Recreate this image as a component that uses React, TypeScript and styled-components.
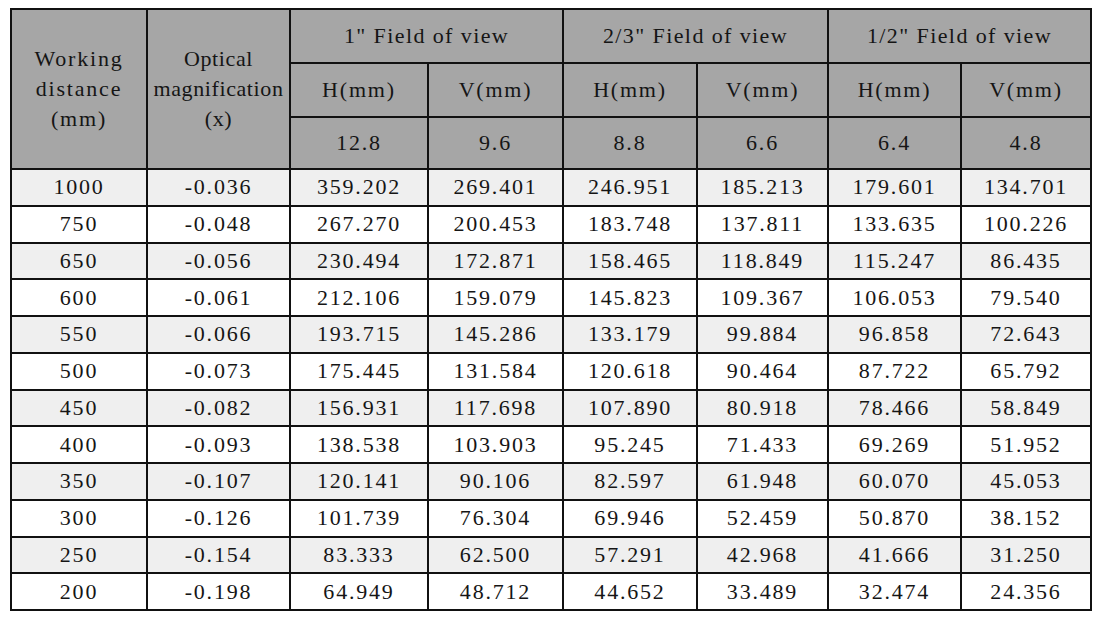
import * as React from 'react';
import styled, { createGlobalStyle } from 'styled-components';

const rows: string[][] = [
  ['1000', '-0.036', '359.202', '269.401', '246.951', '185.213', '179.601', '134.701'],
  ['750', '-0.048', '267.270', '200.453', '183.748', '137.811', '133.635', '100.226'],
  ['650', '-0.056', '230.494', '172.871', '158.465', '118.849', '115.247', '86.435'],
  ['600', '-0.061', '212.106', '159.079', '145.823', '109.367', '106.053', '79.540'],
  ['550', '-0.066', '193.715', '145.286', '133.179', '99.884', '96.858', '72.643'],
  ['500', '-0.073', '175.445', '131.584', '120.618', '90.464', '87.722', '65.792'],
  ['450', '-0.082', '156.931', '117.698', '107.890', '80.918', '78.466', '58.849'],
  ['400', '-0.093', '138.538', '103.903', '95.245', '71.433', '69.269', '51.952'],
  ['350', '-0.107', '120.141', '90.106', '82.597', '61.948', '60.070', '45.053'],
  ['300', '-0.126', '101.739', '76.304', '69.946', '52.459', '50.870', '38.152'],
  ['250', '-0.154', '83.333', '62.500', '57.291', '42.968', '41.666', '31.250'],
  ['200', '-0.198', '64.949', '48.712', '44.652', '33.489', '32.474', '24.356'],
];

const sensors = [
  { name: '1"', h: '12.8', v: '9.6' },
  { name: '2/3"', h: '8.8', v: '6.6' },
  { name: '1/2"', h: '6.4', v: '4.8' },
];

const colWidths = [136, 143, 138, 135, 134, 131, 133, 130];

function App() {
  return (
    <>
      <GlobalStyle />
      <Page>
        <Table>
          <colgroup>
            {colWidths.map((w, i) => (
              <col key={i} style={{ width: w }} />
            ))}
          </colgroup>
          <thead>
            <HeadRow height={54}>
              <HeadCell rowSpan={3}>
                Working
                <br />
                distance
                <br />
                (mm)
              </HeadCell>
              <HeadCell rowSpan={3} spacing={0.6}>
                Optical
                <br />
                magnification
                <br />
                (x)
              </HeadCell>
              {sensors.map(s => (
                <HeadCell key={s.name} colSpan={2} spacing={1.4}>
                  {s.name} Field of view
                </HeadCell>
              ))}
            </HeadRow>
            <HeadRow height={54}>
              {sensors.map(s => (
                <React.Fragment key={s.name}>
                  <HeadCell>H(mm)</HeadCell>
                  <HeadCell>V(mm)</HeadCell>
                </React.Fragment>
              ))}
            </HeadRow>
            <HeadRow height={52}>
              {sensors.map(s => (
                <React.Fragment key={s.name}>
                  <HeadCell>{s.h}</HeadCell>
                  <HeadCell>{s.v}</HeadCell>
                </React.Fragment>
              ))}
            </HeadRow>
          </thead>
          <tbody>
            {rows.map((r, i) => (
              <BodyRow key={r[0]} shaded={i % 2 === 0}>
                {r.map((c, j) => (
                  <Cell key={j}>{c}</Cell>
                ))}
              </BodyRow>
            ))}
          </tbody>
        </Table>
      </Page>
    </>
  );
}

const GlobalStyle = createGlobalStyle`
  body {
    margin: 0;
    background: #ffffff;
    font-family: "Liberation Serif", "Times New Roman", serif;
  }
`;

const Page = styled.div`
  padding: 8px 0 0 10px;
`;

const Table = styled.table`
  border-collapse: collapse;
  table-layout: fixed;
  width: 1082px;
  border: 2px solid #111;
  color: #151515;
  font-family: "Liberation Serif", "Times New Roman", serif;
  font-size: 22px;
  letter-spacing: 1.8px;
`;

const HeadRow = styled.tr<{ height: number }>`
  height: ${props => props.height}px;
  background: #a6a6a6;
`;

const HeadCell = styled.th<{ spacing?: number }>`
  border: 2px solid #111;
  font-family: "Liberation Serif", "Times New Roman", serif;
  font-weight: normal;
  text-align: center;
  vertical-align: middle;
  padding: 0;
  line-height: 30px;
  white-space: nowrap;
  letter-spacing: ${props => props.spacing ?? 1.8}px;
`;

const BodyRow = styled.tr<{ shaded: boolean }>`
  height: 36.75px;
  background: ${props => (props.shaded ? '#efefef' : '#ffffff')};
`;

const Cell = styled.td`
  border: 2px solid #111;
  font-family: "Liberation Serif", "Times New Roman", serif;
  text-align: center;
  vertical-align: middle;
  padding: 0;
  line-height: 24px;
`;

export default App;
